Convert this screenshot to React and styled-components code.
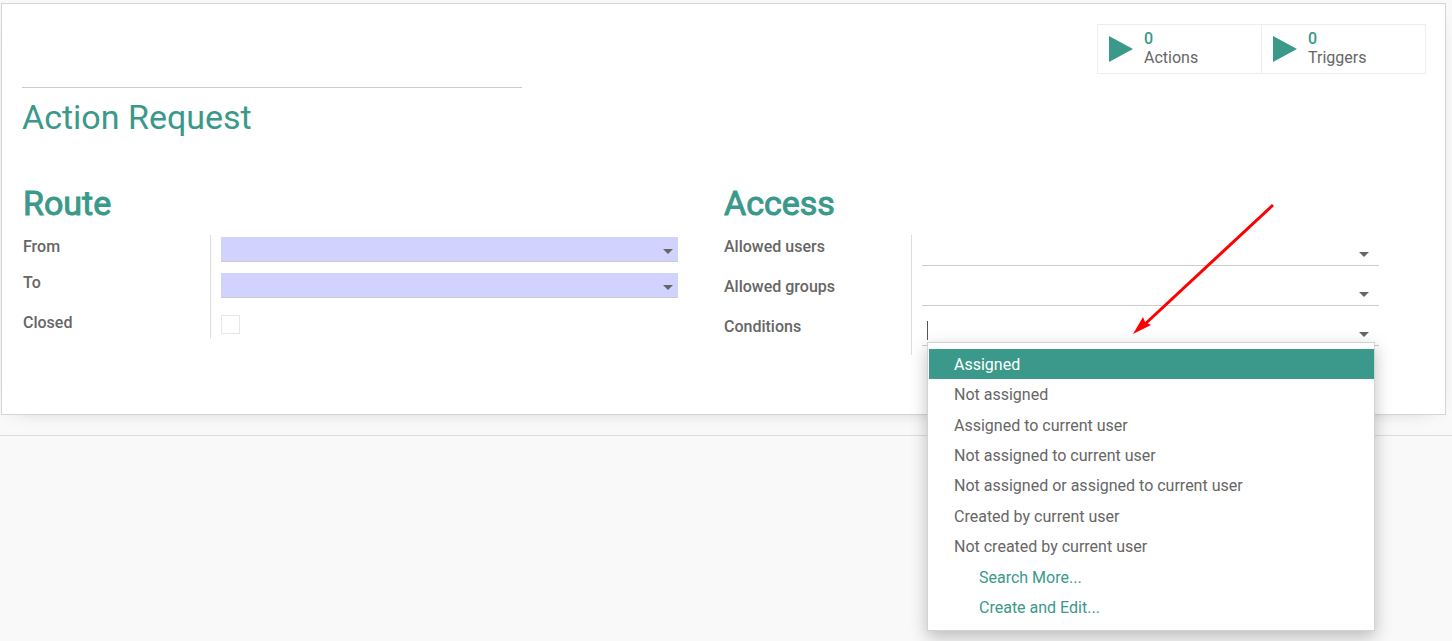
import React from 'react';
import styled, { createGlobalStyle, css } from 'styled-components';

const accent = '#3a998a';
const line = '#cccccc';

const GlobalStyle = createGlobalStyle`
  *, *::before, *::after { box-sizing: border-box; }
  body {
    margin: 0;
    background: #f9f9f9;
    color: #666666;
    font: 16px/19px Roboto, "Liberation Sans", sans-serif;
  }
  input, select, button { font: inherit; color: inherit; }
`;

const Page = styled.main`
  min-height: 100vh;
  padding-top: 3px;
`;

const Sheet = styled.form`
  margin: 0 6px 20px 1px;
  padding: 20px 21px 59px 20px;
  background: #ffffff;
  border: 1px solid #d5d5d5;
  box-shadow: 0 5px 20px -15px rgba(0, 0, 0, 0.4);
`;

const Divider = styled.hr`
  margin: 0;
  border: 0;
  border-top: 1px solid #dddddd;
`;

const Header = styled.header`
  display: flex;
  justify-content: space-between;
  align-items: flex-start;
`;

const NameInput = styled.input`
  width: 500px;
  height: 64px;
  padding: 0;
  border: 0;
  border-bottom: 1px solid ${line};
  background: transparent;
  outline: none;
`;

const StatBar = styled.div`
  display: flex;
  margin-right: -2px;
  border: 1px solid #eeeeee;
`;

const StatButton = styled.button`
  display: flex;
  align-items: center;
  gap: 11px;
  width: 163px;
  height: 48px;
  padding: 0 11px;
  border: 0;
  background: #ffffff;
  text-align: left;

  & + & {
    width: 164px;
    border-left: 1px solid #eeeeee;
  }
`;

const StatText = styled.span`
  display: flex;
  flex-direction: column;
  padding-bottom: 2px;
`;

const StatValue = styled.span`
  color: ${accent};
  font-weight: 500;
`;

const Title = styled.h1`
  margin: 8px 0 45px;
  color: ${accent};
  font-size: 34px;
  line-height: 42px;
  font-weight: 400;
`;

const Groups = styled.div`
  display: grid;
  grid-template-columns: 1fr 1fr;
`;

const Group = styled.section`
  padding-right: 45px;
`;

const GroupTitle = styled.h2`
  margin: 0 0 12px;
  padding-left: 1px;
  color: ${accent};
  font-size: 34px;
  line-height: 40px;
  font-weight: 400;
  -webkit-text-stroke: 1px ${accent};
`;

const Row = styled.div`
  display: flex;
  min-height: ${(p) => p.$height}px;
`;

const LabelCell = styled.div`
  flex: 0 0 189px;
  padding: ${(p) => (p.$low ? 6 : 2)}px 0 0 1px;
  border-right: 1px solid #dddddd;
`;

const Label = styled.label`
  font-weight: 500;
`;

const FieldCell = styled.div`
  flex: 1;
  position: relative;
  padding: ${(p) => (p.$low ? 8 : 2)}px 0 0 10px;
`;

const Field = styled.div`
  display: flex;
  align-items: center;
  height: 29px;
  padding: 0 10px 0 5px;
  border-bottom: 1px solid ${line};

  svg { flex: none; margin-top: 7px; }

  ${(p) =>
    p.$required &&
    css`
      height: 25px;
      padding-right: 5px;
      background: #d2d2ff;

      svg { margin-top: 5px; }
    `}
`;

const bare = css`
  flex: 1;
  min-width: 0;
  height: 20px;
  padding: 0;
  border: 0;
  background: transparent;
  outline: none;
  appearance: none;
`;

const Select = styled.select`${bare}`;
const TextInput = styled.input`${bare}`;

const Cursor = styled.span`
  width: 1px;
  height: 19px;
  margin-bottom: 2px;
  background: #555555;
`;

const Check = styled.input`
  display: block;
  appearance: none;
  width: 19px;
  height: 19px;
  margin: 0;
  border: 1px solid #e6e6e6;
  background: #ffffff;
`;

const Menu = styled.ul`
  position: absolute;
  z-index: 1;
  top: 27px;
  left: 15px;
  right: 4px;
  display: grid;
  grid-auto-rows: 1fr;
  height: 289px;
  margin: 0;
  padding: 6px 0 7px 1px;
  list-style: none;
  background: #ffffff;
  border: 1px solid #d3d3d3;
  box-shadow: 0 6px 16px rgba(0, 0, 0, 0.25);
`;

const Option = styled.li`
  display: flex;
  align-items: center;
  padding-left: ${(p) => (p.$action ? 50 : 25)}px;
  color: ${(p) => (p.$active ? '#ffffff' : p.$action ? accent : 'inherit')};
  background: ${(p) => (p.$active ? accent : 'transparent')};
`;

const Arrow = styled.svg`
  position: absolute;
  z-index: 2;
  top: -115px;
  left: 218px;
  pointer-events: none;
`;

const Caret = () => (
  <svg width="10" height="5" viewBox="0 0 10 5" aria-hidden="true">
    <path d="M0 0H10L5 5Z" fill="#666666" />
  </svg>
);

const Play = () => (
  <svg width="24" height="26" viewBox="0 0 24 26" aria-hidden="true">
    <path d="M0 0L24 13L0 26Z" fill={accent} />
  </svg>
);

const conditions = [
  'Assigned',
  'Not assigned',
  'Assigned to current user',
  'Not assigned to current user',
  'Not assigned or assigned to current user',
  'Created by current user',
  'Not created by current user',
];
const menuActions = ['Search More...', 'Create and Edit...'];

function FormRow({ id, label, height, low, children }) {
  return (
    <Row $height={height}>
      <LabelCell $low={low}>
        <Label htmlFor={id}>{label}</Label>
      </LabelCell>
      <FieldCell $low={low}>{children}</FieldCell>
    </Row>
  );
}

function Stat({ label }) {
  return (
    <StatButton type="button">
      <Play />
      <StatText>
        <StatValue>0</StatValue>
        <span>{label}</span>
      </StatText>
    </StatButton>
  );
}

export default function App() {
  return (
    <Page>
      <GlobalStyle />
      <Sheet>
        <Header>
          <NameInput type="text" aria-label="Name" />
          <StatBar>
            <Stat label="Actions" />
            <Stat label="Triggers" />
          </StatBar>
        </Header>
        <Title>Action Request</Title>
        <Groups>
          <Group>
            <GroupTitle>Route</GroupTitle>
            <FormRow id="from" label="From" height={36}>
              <Field $required>
                <Select id="from" />
                <Caret />
              </Field>
            </FormRow>
            <FormRow id="to" label="To" height={36}>
              <Field $required>
                <Select id="to" />
                <Caret />
              </Field>
            </FormRow>
            <FormRow id="closed" label="Closed" height={31} low>
              <Check id="closed" type="checkbox" />
            </FormRow>
          </Group>
          <Group>
            <GroupTitle>Access</GroupTitle>
            <FormRow id="users" label="Allowed users" height={40}>
              <Field>
                <TextInput id="users" type="text" role="combobox" aria-expanded="false" />
                <Caret />
              </Field>
            </FormRow>
            <FormRow id="groups" label="Allowed groups" height={40}>
              <Field>
                <TextInput id="groups" type="text" role="combobox" aria-expanded="false" />
                <Caret />
              </Field>
            </FormRow>
            <FormRow id="conditions" label="Conditions" height={40}>
              <Field>
                <Cursor />
                <TextInput
                  id="conditions"
                  type="text"
                  role="combobox"
                  aria-expanded="true"
                  aria-controls="condition-list"
                />
                <Caret />
              </Field>
              <Menu id="condition-list" role="listbox">
                {conditions.map((text, i) => (
                  <Option key={text} role="option" aria-selected={i === 0} $active={i === 0}>
                    {text}
                  </Option>
                ))}
                {menuActions.map((text) => (
                  <Option key={text} role="option" aria-selected={false} $action>
                    {text}
                  </Option>
                ))}
              </Menu>
              <Arrow width="148" height="138" viewBox="0 0 148 138" aria-hidden="true">
                <path d="M143 5L14 125" stroke="#ff0000" strokeWidth="3" fill="none" />
                <path d="M3 134L13 117L15 122L21 125Z" fill="#ff0000" />
              </Arrow>
            </FormRow>
          </Group>
        </Groups>
      </Sheet>
      <Divider />
    </Page>
  );
}
